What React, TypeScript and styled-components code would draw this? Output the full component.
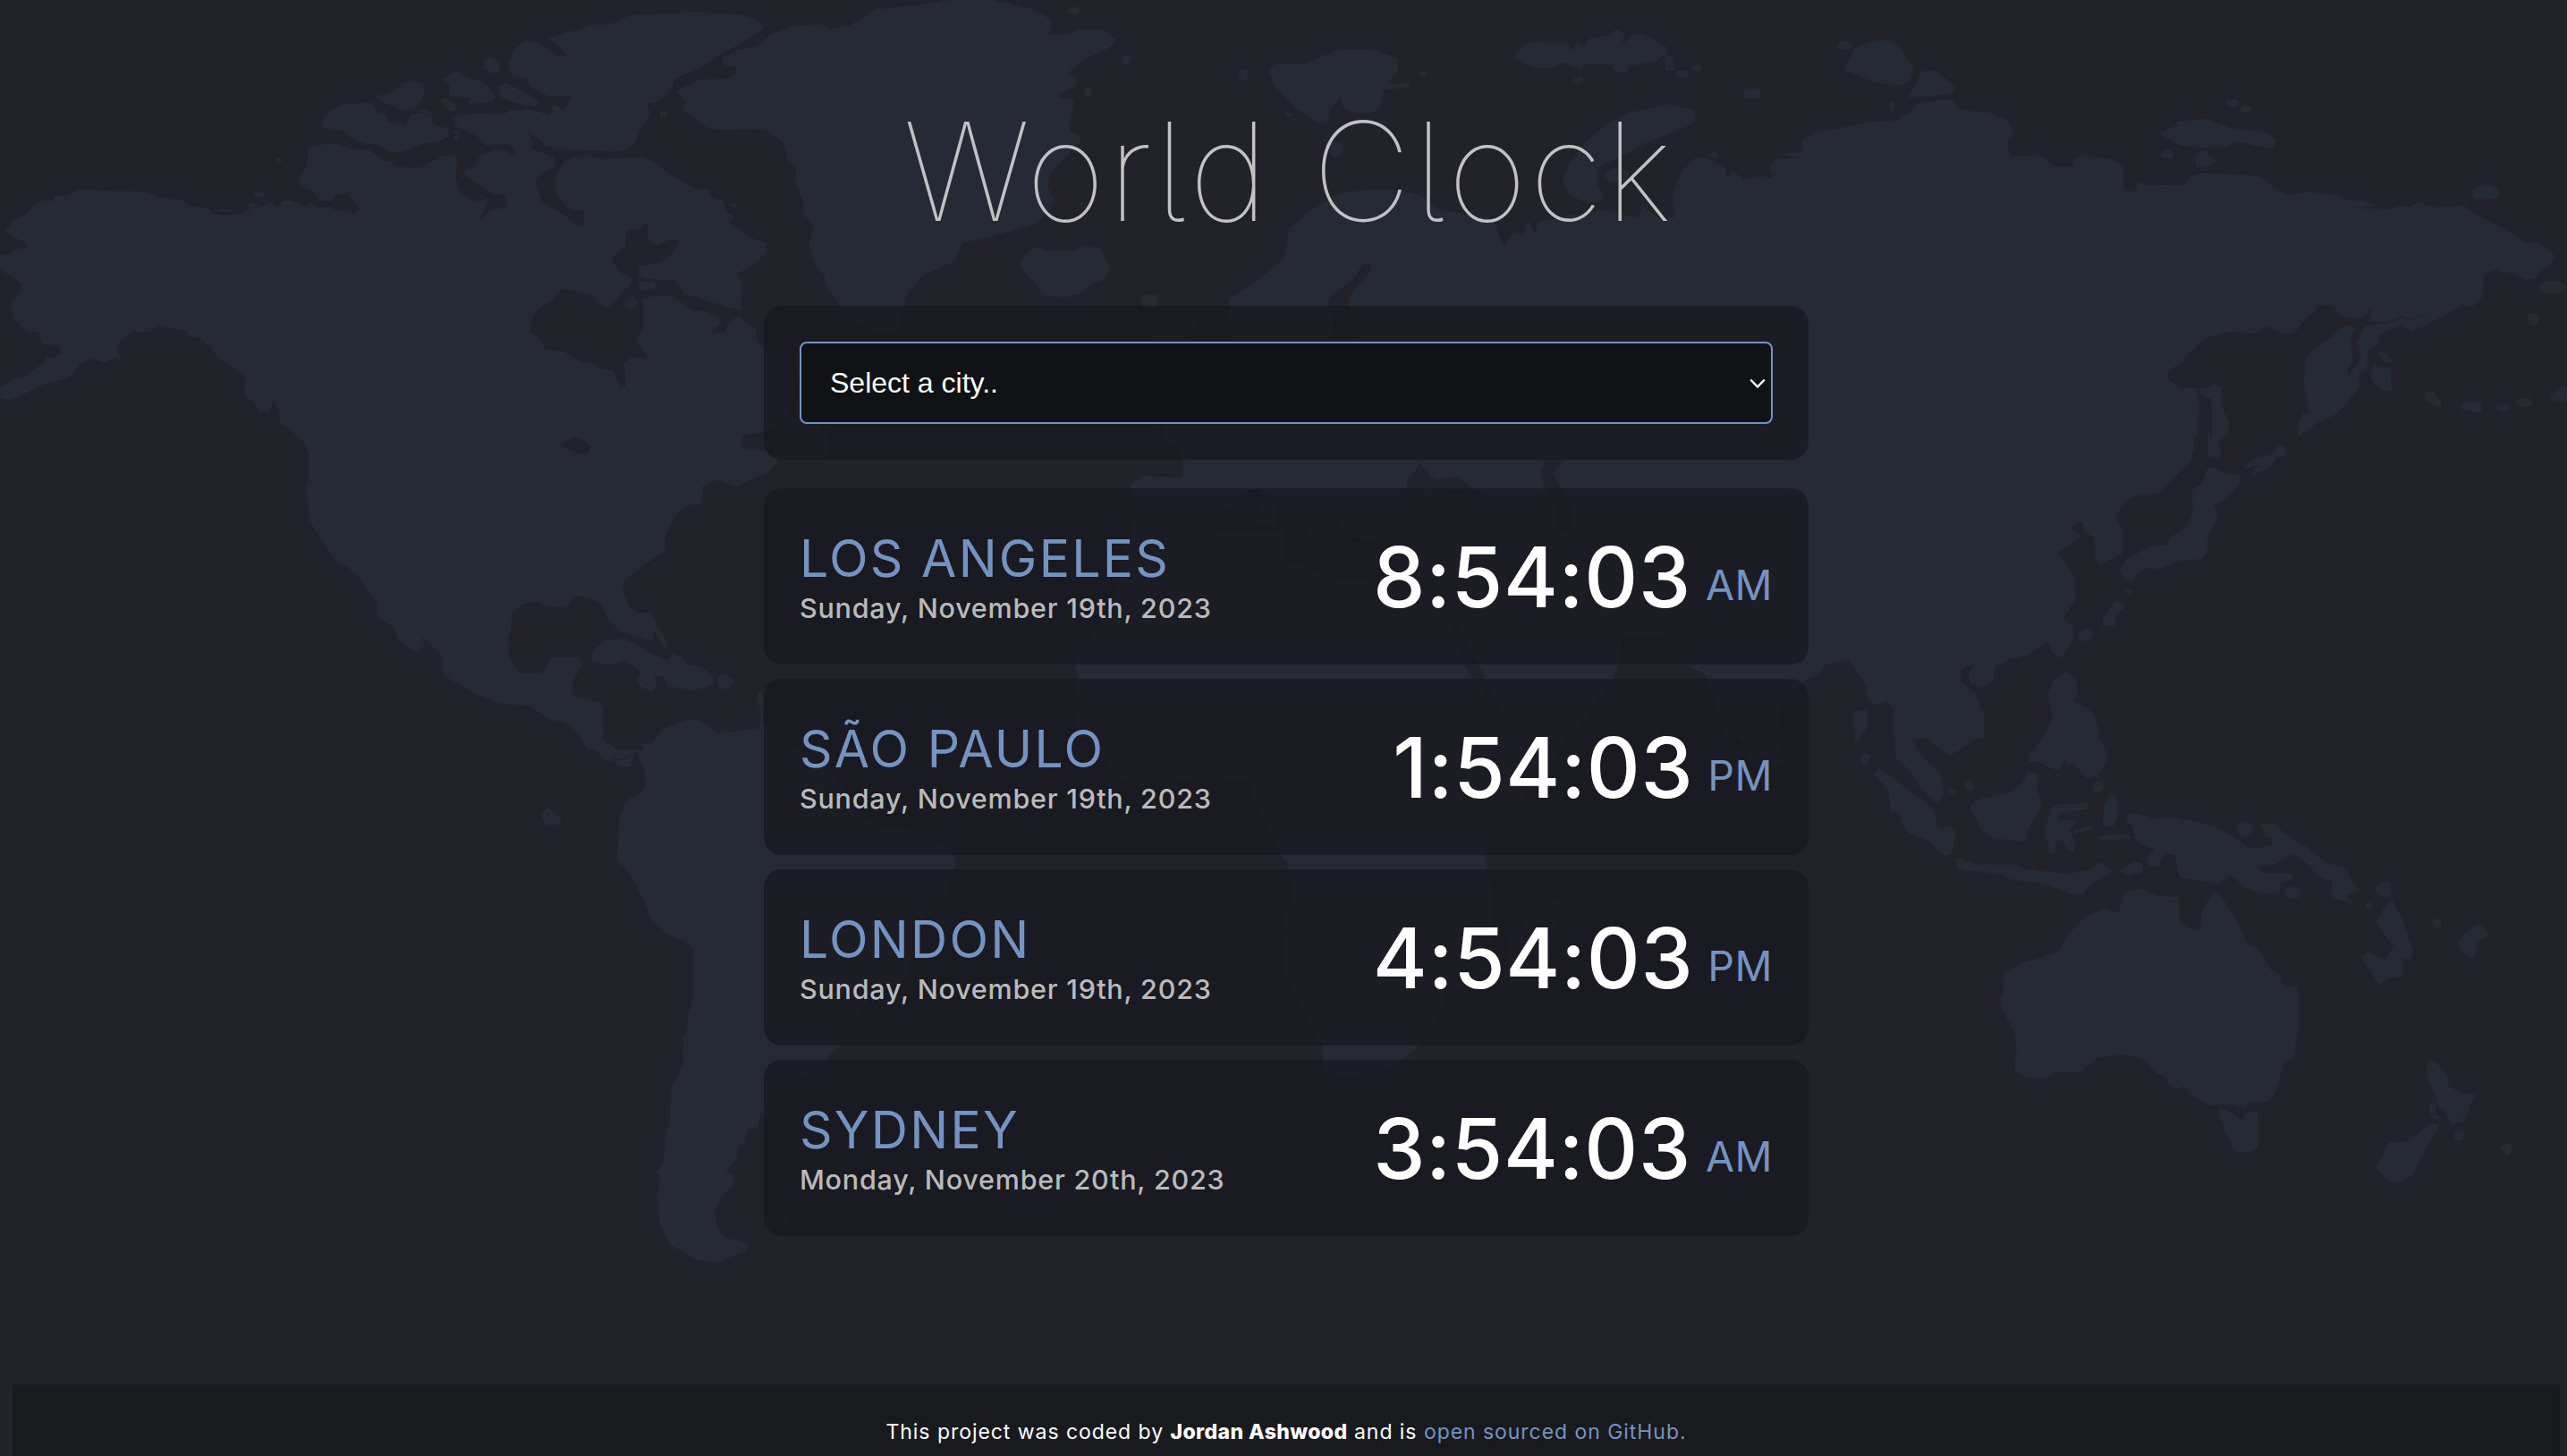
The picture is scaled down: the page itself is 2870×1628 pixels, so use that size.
import React from "react";
import styled, { createGlobalStyle } from "styled-components";

const colors = {
  page: "#22222a",
  land: "#262a34",
  card: "rgba(25, 25, 33, 0.8)",
  accent: "#7593c0",
  muted: "#bababc",
};

const GlobalStyle = createGlobalStyle`
  html, body {
    margin: 0;
    padding: 0;
    background: ${colors.page};
  }
  *, *::before, *::after { box-sizing: border-box; }
  body {
    font-family: Inter, "Liberation Sans", sans-serif;
    font-feature-settings: "cv05" 1;
    color: #fff;
    overflow: hidden;
  }
`;

const Page = styled.div`
  position: relative;
  display: flex;
  flex-direction: column;
  height: 1628px;
  padding: 0 8px 0 14px;
  overflow: hidden;
`;

const Backdrop = styled.svg`
  position: absolute;
  inset: 0;
  z-index: 0;
  width: 2870px;
  height: 1628px;
`;

const Main = styled.main`
  position: relative;
  z-index: 1;
  flex: 1;
  width: 1168px;
  margin: 0 auto;
  display: flex;
  flex-direction: column;
`;

const Title = styled.h1`
  margin: 118px 0 77px;
  padding-left: 6px;
  font-size: 153px;
  line-height: 147px;
  font-weight: 100;
  letter-spacing: 2.9px;
  text-align: center;
  white-space: nowrap;
  color: #c2c2c4;
`;

const Panel = styled.section`
  padding: 40px;
  border-radius: 20px;
  background: ${colors.card};
`;

const SelectPanel = styled(Panel)`
  height: 172px;
  margin-bottom: 32px;
`;

const SelectField = styled.label`
  position: relative;
  display: block;
  height: 92px;
`;

const CitySelect = styled.select`
  appearance: none;
  width: 100%;
  height: 100%;
  padding: 0 32px;
  border: 2px solid ${colors.accent};
  border-radius: 8px;
  background: #111215;
  color: #fff;
  font-family: "Liberation Sans", Arial, sans-serif;
  font-size: 32px;
`;

const Chevron = styled.svg`
  position: absolute;
  right: 8px;
  top: 41px;
  width: 18px;
  height: 12px;
  fill: none;
  stroke: #fff;
  stroke-width: 2.4;
`;

const CityList = styled.div`
  display: flex;
  flex-direction: column;
  gap: 16px;
`;

const CityCard = styled(Panel)`
  display: flex;
  justify-content: space-between;
  align-items: flex-start;
  height: 197px;
`;

const CityName = styled.h2`
  margin: -1px 0 1px;
  font-size: 57px;
  line-height: 80px;
  font-weight: 400;
  letter-spacing: 2.3px;
  text-transform: uppercase;
  color: ${colors.accent};
`;

const CityDate = styled.div`
  font-size: 30.5px;
  line-height: 28px;
  font-weight: 500;
  letter-spacing: 0.78px;
  color: ${colors.muted};
`;

const Time = styled.div`
  display: flex;
  gap: 16px;
`;

const Digits = styled.span`
  font-size: 93px;
  line-height: 118px;
  font-weight: 500;
  letter-spacing: 0.6px;
`;

const Meridiem = styled.span`
  font-size: 46.5px;
  line-height: 136px;
  font-weight: 400;
  letter-spacing: 0.5px;
  color: ${colors.accent};
`;

const Footer = styled.footer`
  position: relative;
  z-index: 1;
  height: 80px;
  padding-top: 38px;
  background: #191a1e;
  text-align: center;
  font-size: 23px;
  line-height: 31px;
  font-weight: 400;
  letter-spacing: 0.95px;
`;

const Author = styled.strong`
  font-weight: 800;
  letter-spacing: 0.4px;
`;

const SourceLink = styled.a`
  color: ${colors.accent};
  text-decoration: none;
`;

/* Each sheet is drawn on its own 1568-unit grid and scaled onto the page. */
type Sheet = { transform: string; land: string; water?: string; islets?: number[][] };

const sheets: Sheet[] = [
  {
    transform: "scale(0.612245 0.522959)",
    land: `
M0,547 L18,543 28,532 50,529 43,515 24,508 10,492 20,485 22,470 45,460 60,440 80,428 97,430 100,420 130,416 140,406 158,404 200,409 238,408 272,412 300,424 335,427 342,440 380,445 390,455 405,460 430,458 455,447 480,440 498,433 507,445 516,430 530,428 547,436 558,442 565,432 580,443 600,443 625,452 648,457 655,445 642,425 638,411 612,418 607,430 585,429 570,408 550,400 547,385 562,345 563,316 585,309 612,308 640,318 670,318 695,337 700,343 715,347 720,356 772,358 780,347 798,342 805,333 830,333 836,345 832,380 842,413 870,431 892,422 882,455 874,472 897,450 924,442 922,416 900,415 878,397 850,376 848,366 868,354 875,334 905,320 925,322 940,337 940,320 925,305 900,312 885,310 870,290 832,270 828,250 870,243 920,245 928,236 970,234 1005,247 1010,222 1030,236 1046,206 1000,205 968,185 963,168 935,163 928,132 940,104 960,88 985,92 1015,118 1038,122 1022,100 1002,80 1050,65 1080,53 1115,52 1150,32 1200,30 1270,25 1355,32 1380,42 1395,55 1393,64 1345,98 1310,120 1280,145 1232,168 1226,190 1205,215 1182,222 1187,240 1180,260 1168,275 1160,305 1140,322 1120,325 1100,321 1050,321 995,312 980,295 965,284 973,305 970,318 1012,335 1012,358 990,370 977,386 990,432 1010,447 1030,458 1058,487 1067,480 1067,453 1040,447 1018,420 1013,385 1025,352 1045,335 1075,334 1100,340 1175,335 1205,355 1230,380 1270,403 1292,403 1300,422 1322,430 1328,455 1342,463 1330,475 1350,490 1375,510 1398,520 1400,540 1370,570 1347,585 1356,605 1352,664 1310,650 1250,628 1233,600 1185,597 1165,590 1168,570 1210,560 1225,545 1240,515 1225,511 1200,525 1185,515 1182,474 1168,490 1148,492 1142,500 1143,525 1116,553 1130,580 1153,593 1152,608 1135,625 1127,643 1108,658 1090,648 1087,632 1060,624 1025,618 1010,640 985,660 970,683 968,710 985,722 995,746 1030,752 1060,772 1085,778 1098,788 1120,792 1133,828 1142,826 1143,800 1138,778 1152,763 1170,764 1181,770 1180,757 1162,728 1175,695 1172,640 1195,632 1230,634 1265,664 1290,666 1300,680 1298,712 1325,712 1330,690 1350,676 1370,698 1380,702 1383,730 1395,745 1430,775 1455,810 1452,840 1432,895 1425,910 1380,928 1357,930 1355,958 1395,962 1412,970 1415,920 1470,880 1510,930 1515,975 1500,983 1420,983 1420,990 1400,1012 1378,1022 1345,1040 1310,1026 1283,1040 1282,1075 1255,1082 1232,1103 1215,1145 1215,1178 1180,1205 1142,1240 1137,1260 1150,1298 1165,1310 1190,1310 1202,1340 1217,1370 1215,1387 1205,1370 1195,1350 1190,1372 1170,1362 1135,1352 1110,1322 1097,1290 1075,1278 1050,1273 1035,1298 1000,1296 980,1287 955,1292 935,1312 933,1345 927,1370 930,1405 948,1440 993,1438 1007,1405 1058,1405 1062,1420 1045,1462 1045,1490 1095,1500 1101,1515 1101,1568 1060,1568 1040,1550 1000,1535 965,1507 930,1508 880,1490 815,1448 808,1435 805,1400 770,1360 775,1382 762,1395 745,1385 725,1365 720,1342 690,1320 688,1285 672,1265 655,1232 635,1213 617,1208 600,1175 566,1115 563,1070 557,1045 565,1020 564,970 552,940 512,905 510,875 500,860 492,880 472,880 462,857 447,850 448,805 405,770 365,722 350,720 338,707 290,697 272,709 243,710 218,730 212,765 190,776 165,767 148,778 128,806 85,820 20,855 0,850 0,828 20,812 40,808 90,768 115,755 105,740 75,735 70,711 48,710 25,680 20,645 35,625 40,607 0,575Z
M1580,60 L1545,55 1520,62 1500,52 1440,58 1405,75 1385,98 1345,108 1318,125 1320,138 1343,142 1345,155 1330,168 1280,170 1235,193 1252,215 1248,235 1290,272 1320,278 1395,276 1430,305 1440,345 1453,355 1455,400 1465,425 1468,460 1486,482 1478,520 1488,565 1505,588 1510,615 1532,648 1545,675 1580,700Z
M587,270 L590,255 605,235 630,222 680,220 690,240 708,245 708,260 740,265 750,245 770,233 788,240 792,265 818,275 820,292 800,303 770,308 735,325 710,324 690,310 650,302 625,280 590,275Z
M685,207 L720,195 735,177 755,171 775,182 776,197 760,230 740,236 705,222Z
M808,170 L825,155 838,152 850,165 885,175 905,205 900,218 855,223 860,210 822,205 820,182Z
M883,130 L895,121 912,135 912,152 898,157 883,145Z
M910,185 L925,178 950,192 985,217 980,228 955,226 915,208Z
M803,213 L815,209 833,225 830,240 812,232Z
M505,338 h9 v11 h-9Z M1204,238 h14 v16 h-12Z M828,280 h12 v6 h-12Z
M1168,602 h28 l2,15 -28,4 -5,-8Z
M1142,640 l15,-8 8,15 -10,15 -15,-5Z
M1298,672 L1314,675 1315,695 1300,708Z
M1080,1405 L1085,1388 1105,1370 1135,1365 1160,1375 1190,1398 1220,1412 1228,1397 1245,1405 1255,1420 1280,1425 1303,1445 1303,1462 1285,1470 1265,1477 1220,1467 1213,1447 1195,1445 1200,1465 1190,1480 1165,1465 1165,1450 1172,1440 1140,1411 1115,1422 1082,1415Z
M1308,1450 l15,-10 18,15 -8,18 -20,0Z
M1385,1478 L1393,1478 1393,1568 1386,1568 1390,1520 1383,1500Z`,
    water: `M1022,950 L1048,935 1066,940 1078,955 1075,967 1060,970 1030,957Z
M385,457 h40 l5,-5 h-40Z M752,243 q20,-12 38,10 q-20,-14 -38,-10Z`,
    islets: [[473, 416, 9, 6], [461, 439, 9, 5], [410, 452, 20, 5], [834, 295, 6, 5], [1340, 439, 6, 4], [89, 768, 7, 5], [217, 762, 4, 6]],
  },
  {
    transform: "translate(960 0) scale(0.612245 0.522959)",
    land: `
M-14,52 L0,43 30,20 100,12 170,0 245,0 320,20 352,42 348,75 385,73 400,62 450,65 470,85 455,105 415,125 380,158 400,170 395,185 362,202 375,212 393,212 385,280 405,290 405,305 350,370 345,400 360,430 325,480 235,508 190,518 175,560 120,585 85,635 80,670 72,708 40,710 0,690 -14,690Z
M748,150 L760,137 815,136 875,107 945,107 985,125 985,150 965,180 1005,178 1008,186 960,192 953,230 935,242 905,242 885,230 880,207 860,235 855,265 835,262 795,228 760,185Z
M1198,118 L1215,95 1240,88 1265,97 1290,92 1305,108 1310,92 1325,98 1335,82 1365,75 1385,63 1400,72 1390,100 1410,78 1430,72 1450,82 1475,100 1475,115 1455,132 1410,140 1400,157 1380,152 1375,140 1330,135 1320,147 1300,143 1290,133 1270,145 1235,146 1200,128Z
M295,570 L300,548 325,528 340,535 395,537 412,525 440,530 460,572 450,598 418,610 412,625 370,637 335,628 318,600Z
M1285,385 L1300,345 1325,305 1370,262 1410,240 1475,223 1528,235 1528,260 1505,275 1440,305 1400,330 1350,360 1350,395 1360,425 1330,435 1295,415Z
M516,630 h30 l4,15 -18,20 -14,-10Z M483,117 l18,3 -8,18 -14,-3Z M694,150 l15,-2 3,12 -6,14 -12,-5Z M1472,118 l14,2 4,30 -16,2Z
M677,655 L677,640 720,605 750,580 778,550 785,490 825,450 870,418 900,408 960,405 1000,410 1030,420 1060,450 1110,458 1160,468 1168,500 1180,528 1195,498 1215,502 1222,470 1235,502 1240,475 1300,460 1370,450 1425,467 1430,440 1460,465 1490,465 1485,420 1500,370 1530,335 1555,340 1568,350 1584,360 1584,1580 400,1580 390,1500 402,1451 395,1421 400,1400 470,1280 480,1200 500,1130 490,1100 497,1035 520,1018 593,1020 590,960 550,935 560,910 640,900 680,720Z
M530,730 L590,665 620,680 600,730Z`,
    water: `M1000,1052 L1003,1025 1025,992 1045,1020 1060,1025 1095,1017 1115,1040 1140,1062 1080,1055 1040,1042Z
M1290,983 L1255,983 1246,1005 1252,1040 1270,1080 1270,1130 1305,1142 1300,1080 1268,1012Z
M935,565 L920,565 905,595 860,635 855,655 868,690 860,730 905,725 925,705 985,695 980,685 920,680 895,662 897,630 935,580Z
M610,1152 L690,1075 725,1040 740,1060 720,1120 760,1125 765,1070 800,1100 830,1150 870,1108 900,1150 985,1165 960,1230 880,1240 780,1200 775,1135 690,1135Z
M1080,1320 L1110,1370 1175,1520 1165,1518 1105,1420Z
M1300,1580 L1375,1455 1395,1400 1393,1360 1480,1362 1520,1430 1545,1440 1600,1580Z`,
    islets: [[1504, 158, 13, 8], [1531, 145, 10, 8], [1315, 172, 10, 8], [1030, 158, 8, 6], [393, 23, 12, 8], [419, 196, 7, 11], [786, 245, 6, 4], [872, 320, 14, 16], [1385, 375, 22, 16], [1562, 332, 6, 7]],
  },
  {
    transform: "translate(1910 0) scale(0.612245 0.522959)",
    land: `
M-10,350 L0,342 15,355 22,397 45,365 65,385 95,375 118,382 110,355 122,340 175,336 125,331 172,322 170,300 195,283 225,277 290,261 347,258 350,246 365,245 382,222 410,215 448,215 455,233 515,241 545,255 557,280 545,305 552,333 615,335 625,352 645,358 665,356 668,338 690,333 735,340 755,352 760,405 770,411 780,408 785,388 805,396 872,395 880,377 905,369 1000,376 1020,385 1030,400 1060,418 1095,409 1150,418 1165,427 1190,428 1222,440 1170,445 1240,447 1265,440 1282,443 1295,432 1330,442 1380,440 1400,457 1475,503 1490,518 1520,520 1530,530 1547,548 1535,570 1520,575 1512,595 1495,599 1470,585 1430,577 1417,590 1413,635 1395,656 1375,652 1345,675 1285,708 1265,697 1240,707 1225,715 1222,735 1205,750 1203,790 1190,797 1187,830 1160,870 1145,887 1108,907 1077,935 1075,915 1085,885 1097,880 1087,820 1090,775 1100,750 1140,718 1150,705 1170,695 1182,705 1172,725 1178,770 1168,785 1168,803 1190,770 1185,730 1200,695 1240,692 1265,680 1285,686 1325,660 1285,682 1265,676 1240,689 1205,687 1213,655 1195,680 1170,678 1152,675 1142,653 1118,652 1085,690 1070,713 1050,713 1018,698 1000,713 950,709 915,720 880,752 865,775 840,793 837,808 860,828 892,830 897,870 893,930 885,940 888,960 880,990 840,1032 825,1052 800,1060 790,1055 765,1070 742,1103 757,1135 755,1185 715,1208 707,1195 705,1150 685,1135 684,1115 658,1128 678,1140 678,1152 640,1180 668,1235 671,1280 648,1322 665,1340 667,1362 645,1407 627,1395 620,1372 580,1402 545,1413 525,1425 520,1455 500,1470 478,1462 475,1440 485,1421 462,1430 460,1455 490,1485 503,1530 503,1580 340,1580 338,1515 325,1497 305,1507 290,1495 287,1462 255,1410 212,1421 205,1440 175,1457 130,1510 125,1580 30,1580 0,1451 -10,1440Z
M893,830 L905,850 918,852 920,940 912,915 912,975 930,980 938,970 930,945 952,925 950,900 938,870 937,828 925,820 915,827Z
M912,1000 L925,1000 945,1014 972,1017 970,1035 940,1072 922,1077 930,1100 912,1150 912,1180 900,1195 860,1200 820,1218 800,1213 780,1230 772,1246 755,1232 752,1213 765,1195 805,1168 835,1166 850,1143 875,1125 885,1085 882,1050 900,1035Z
M977,1000 L1000,978 1030,972 1043,950 1055,960 1053,976 1035,980 1030,995 978,1028 1000,1008Z
M743,1285 L760,1287 757,1303 743,1315 742,1338 720,1340 720,1322Z
M676,1355 l10,-10 14,3 2,12 -10,11 -15,-5Z M760,1262 l16,-2 -6,14Z
M650,1437 L670,1447 675,1475 668,1500 695,1517 700,1540 712,1560 712,1580 610,1580 630,1535 620,1490 628,1455Z
M250,140 L268,102 290,90 320,85 345,95 360,120 375,142 370,170 355,182 305,178 250,150Z
M365,210 L390,152 415,151 450,185 448,200Z
M64,190 h31 v21 h-31Z
M823,285 L853,270 858,260 905,254 960,275 1020,284 1037,297 1032,315 1010,316 965,302 945,315 880,316 850,305Z
M890,330 L905,323 930,345 905,357 890,357Z
M1392,415 L1400,402 1420,395 1440,402 1446,415 1435,426 1400,426Z
M1222,755 q20,-10 27,20 h-15Z M1215,770 L1220,785 1248,787 1246,820 1252,835 1228,835 1210,810Z
M1535,850 L1560,825 1572,830 1572,858 1545,858Z
M1307,840 L1322,836 1338,855 1338,872 1310,857Z M1374,862 l38,-5 0,25 -35,-4Z`,
    water: `M905,735 l14,-8 -10,4Z M983,1003 l20,-10 -8,15Z`,
    islets: [[249, 97, 14, 10], [336, 226, 6, 10], [838, 330, 12, 9], [958, 220, 12, 8], [982, 233, 11, 8], [1541, 614, 25, 14], [1506, 683, 11, 13], [1450, 872, 14, 8], [1491, 860, 16, 10], [11, 330, 6, 7], [278, 1545, 13, 22]],
  },
  {
    transform: "translate(0 800) scale(0.612245 0.528061)",
    land: `
M985,-5 L1000,3 1030,12 1055,38 1072,70 1090,75 1107,97 1122,97 1130,108 1150,108 1157,90 1160,72 1125,72 1100,50 1101,-5Z
M1170,60 L1190,58 1210,30 1250,10 1270,8 1295,20 1310,37 1350,34 1360,30 1380,30 1388,25 1400,15 1440,60 1520,120 1568,215 1610,235 1683,245 1710,270 1743,295 1743,325 1730,375 1690,425 1672,500 1650,560 1590,590 1568,630 1535,700 1512,722 1510,735 1460,768 1460,800 1430,832 1395,842 1388,842 1385,870 1365,877 1360,905 1347,915 1345,940 1325,965 1342,975 1340,995 1317,1020 1305,1050 1310,1085 1325,1108 1350,1112 1368,1120 1360,1135 1310,1158 1275,1153 1225,1122 1205,1080 1200,1020 1205,975 1197,967 1213,940 1215,880 1223,870 1225,790 1247,740 1248,680 1255,670 1256,640 1267,590 1267,495 1250,477 1235,472 1215,460 1187,430 1180,400 1150,335 1128,307 1130,220 1143,180 1172,163 1180,145 1175,105 1160,75 1178,72Z
M988,205 L1003,195 1025,218 1022,230 1000,233 990,222Z
M1395,1060 L1440,1055 1440,1075 1400,1092Z
M1962,-10 L2008,90 2068,150 2128,145 2218,125 2283,145 2298,200 2338,295 2350,310 2358,380 2338,450 2348,560 2398,660 2413,700 2418,755 2448,765 2528,750 2583,710 2628,640 2643,590 2718,540 2728,440 2713,295 2718,260 2798,150 2858,60 2868,-10Z
M2758,470 L2828,380 2853,400 2808,560 2768,610 2753,560Z`,
    water: `M1112,82 q18,16 32,5 l12,-8 q-14,22 -34,14Z`,
  },
  {
    transform: "translate(1910 800) scale(0.612245 0.528061)",
    land: `
M30,-10 L75,90 145,110 120,40 125,-10Z
M340,-10 L342,90 370,120 385,150 420,188 425,170 430,168 425,125 390,85 372,52 380,28 390,28 410,60 440,85 460,72 495,45 503,5 503,-10Z
M265,-10 L268,55 278,55 280,25 290,5 290,-10Z
M300,122 L315,112 340,135 375,165 412,200 418,235 430,240 440,233 453,245 445,292 432,298 400,265 365,250 352,225 350,205 333,203 330,160Z
M450,305 L458,300 490,315 560,315 580,325 655,335 700,325 715,311 740,328 720,345 700,357 685,378 665,379 615,357 550,347 540,337 455,325Z
M478,195 L490,180 515,170 550,165 575,140 585,117 603,125 600,155 609,190 585,240 578,267 520,260 500,245Z
M625,195 L640,188 670,188 695,183 690,200 665,205 640,207 640,222 675,222 660,240 670,270 668,290 655,285 645,262 635,265 632,293 622,290 615,240Z
M662,245 L700,232 705,238 670,250Z
M627,-10 L630,10 607,55 590,75 583,100 600,98 640,118 650,92 655,108 665,100 690,132 710,130 728,95 725,70 712,45 710,20 700,-10Z
M720,235 L722,195 733,163 745,170 750,195 740,235Z M710,256 L765,250 772,262 715,263Z
M750,330 L775,310 793,312 793,332 770,340Z M800,300 L815,285 835,290 820,320 805,318Z
M763,208 L780,207 820,220 835,215 885,222 935,240 990,282 1030,275 1030,262 1018,258 1008,230 1030,228 1065,260 1095,280 1125,310 1165,325 1172,345 1192,370 1165,380 1178,400 1140,385 1138,350 1112,340 1095,315 1068,293 1035,315 1000,320 1020,335 1065,335 1068,347 1045,355 1045,375 1010,377 980,365 955,338 930,358 860,342 852,295 825,290 795,275 780,265 775,235 765,225Z
M540,545 L570,525 600,515 640,500 655,465 690,425 725,407 748,420 760,375 790,366 820,380 858,385 861,440 885,455 897,453 903,410 922,372 932,378 962,425 985,487 1003,492 1028,540 1043,548 1048,568 1060,576 1075,573 1079,640 1070,725 1050,738 1035,800 1025,818 990,818 978,833 965,825 915,825 880,803 870,785 855,790 842,782 838,770 820,757 797,730 760,717 710,724 680,755 635,756 615,768 580,767 558,750 563,715 560,672 535,620 532,600 537,597Z
M930,833 L945,835 975,855 988,838 1003,840 1005,912 990,925 960,923 945,885Z
M1310,745 L1315,730 1330,735 1350,765 1352,785 1375,798 1400,802 1388,838 1380,862 1372,862 1380,840 1368,865 1355,867 1345,835 1330,825 1330,810 1315,775Z
M1316,822 h12 v20 l10,12 -14,2 -6,-12Z
M1318,863 L1336,867 1300,940 1285,975 1268,987 1243,987 1220,958 1243,903 1272,903 1290,883 1285,895Z
M1362,883 h18 l-3,17 h-16Z M1444,915 l14,-10 10,2 -2,18 -8,9Z
M1218,362 L1230,354 1245,352 1248,385 1228,383 1218,374Z
M1250,390 L1268,435 1288,500 1282,517 1265,515 1270,540 1265,552 1240,558 1225,570 1190,510 1205,503 1235,515 1252,490 1220,440 1235,405Z
M1368,478 L1395,447 1410,442 1425,460 1420,470 1405,478 1397,515 1375,502Z`,
    islets: [[286, 92, 9, 13], [712, 151, 10, 12], [476, 149, 9, 12], [445, 160, 8, 6], [980, 241, 15, 15], [1067, 375, 15, 14], [1206, 402, 7, 7], [1331, 440, 8, 10], [641, 125, 4, 3]],
  },
];

const WorldMap = () => (
  <Backdrop viewBox="0 0 2870 1628" aria-hidden="true">
    {sheets.map((sheet, i) => (
      <g key={i} transform={sheet.transform}>
        <path d={sheet.land} fill={colors.land} />
        {sheet.islets?.map(([cx, cy, rx, ry]) => (
          <ellipse key={`${cx}-${cy}`} cx={cx} cy={cy} rx={rx} ry={ry} fill={colors.land} />
        ))}
        {sheet.water && <path d={sheet.water} fill={colors.page} />}
      </g>
    ))}
  </Backdrop>
);

const cities = [
  { name: "Los Angeles", date: "Sunday, November 19th, 2023", time: "8:54:03", meridiem: "AM" },
  { name: "São Paulo", date: "Sunday, November 19th, 2023", time: "1:54:03", meridiem: "PM" },
  { name: "London", date: "Sunday, November 19th, 2023", time: "4:54:03", meridiem: "PM" },
  { name: "Sydney", date: "Monday, November 20th, 2023", time: "3:54:03", meridiem: "AM" },
];

export default function App() {
  return (
    <Page>
      <GlobalStyle />
      <WorldMap />
      <Main>
        <Title>World Clock</Title>
        <SelectPanel>
          <SelectField>
            <CitySelect defaultValue="">
              <option value="">Select a city..</option>
            </CitySelect>
            <Chevron viewBox="0 0 18 12">
              <path d="M1.2 1.5 9 9.6 16.8 1.5" />
            </Chevron>
          </SelectField>
        </SelectPanel>
        <CityList>
          {cities.map((city) => (
            <CityCard key={city.name}>
              <div>
                <CityName>{city.name}</CityName>
                <CityDate>{city.date}</CityDate>
              </div>
              <Time>
                <Digits>{city.time}</Digits>
                <Meridiem>{city.meridiem}</Meridiem>
              </Time>
            </CityCard>
          ))}
        </CityList>
      </Main>
      <Footer>
        This project was coded by <Author>Jordan Ashwood</Author> and is{" "}
        <SourceLink href="#">open sourced on GitHub.</SourceLink>
      </Footer>
    </Page>
  );
}
